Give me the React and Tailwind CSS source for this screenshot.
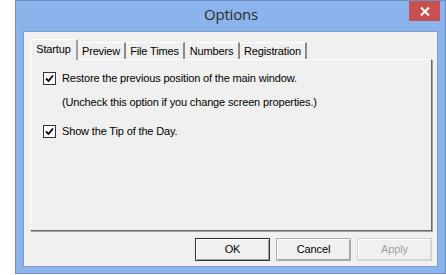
import React from 'react';

const tabs = [
  { label: 'Startup', w: 'w-[48px]' },
  { label: 'Preview', w: 'w-[48px]' },
  { label: 'File Times', w: 'w-[59px]' },
  { label: 'Numbers', w: 'w-[55px]' },
  { label: 'Registration', w: 'w-[67px]' },
];

function Check({ checked = true }) {
  return (
    <span className="w-[13px] h-[13px] border border-[#333] bg-white flex items-center justify-center shrink-0">
      {checked && (
        <svg width="9" height="9" viewBox="0 0 9 9">
          <path d="M1 4.5 L3.5 7 L8 1.5" fill="none" stroke="#000" strokeWidth="1.8" />
        </svg>
      )}
    </span>
  );
}

function Button({ children, disabled, primary }) {
  return (
    <button
      className={
        'w-[75px] h-[23px] bg-[#f0f0f0] text-[11px] leading-[13px] ' +
        (primary
          ? 'border border-[#333] shadow-[inset_1px_1px_0_#fff,inset_-1px_-1px_0_#a0a0a0]'
          : 'border border-[#adadad] shadow-[inset_1px_1px_0_#fff,inset_-1px_-1px_0_#a0a0a0]') +
        (disabled ? ' text-[#a0a0a0] border-[#d0d0d0] shadow-[inset_1px_1px_0_#fff,inset_-1px_-1px_0_#d8d8d8]' : ' text-black')
      }
    >
      {children}
    </button>
  );
}

export default function App() {
  return (
    <div className="w-[446px] h-[275px] bg-white pl-[15px] font-['Liberation_Sans',Arial,sans-serif] overflow-hidden">
      <div className="w-[431px] h-[274px] bg-[#8cb4ec] border border-[#6f8fc3] flex flex-col relative">
        {/* Title bar */}
        <div className="h-[30px] flex items-center justify-center pb-[3px]">
          <span className="font-['Open_Sans',sans-serif] text-[15px] text-[#2b2b2b] ml-[1px] tracking-[-0.2px]">Options</span>
        </div>
        <div className="absolute top-0 right-[5px] w-[31px] h-[20px] bg-[#c75050] flex items-center justify-center">
          <svg width="10" height="9" viewBox="0 0 10 9">
            <path d="M1 0.5 L9 8.5 M9 0.5 L1 8.5" stroke="#fff" strokeWidth="2" />
          </svg>
        </div>

        {/* Client area */}
        <div className="flex-1 mx-[7px] mb-[6px] bg-[#f0f0f0] border border-[#7d9ccb] flex flex-col pl-[6px] pr-[5px] pt-[6px] text-[11px] leading-[13px] tracking-[-0.15px]">
          {/* Tabs */}
          <div className="flex items-end h-[21px] relative z-10">
            {tabs.map((t, i) =>
              i === 0 ? (
                <div
                  key={t.label}
                  className={t.w + ' h-[21px] bg-[#f0f0f0] border-l border-t border-white border-r-2 border-r-[#a0a0a0] rounded-tr-[2px] text-black flex items-center justify-center mb-[-1px] pb-[2px]'}
                >
                  {t.label}
                </div>
              ) : (
                <div
                  key={t.label}
                  className={t.w + ' h-[17px] bg-[#f0f0f0] border-t border-white border-r-2 border-r-[#8a8a8a] text-black flex items-center justify-center pt-[1px]'}
                >
                  {t.label}
                </div>
              )
            )}
          </div>

          {/* Tab panel */}
          <div className="h-[172px] border-t border-l border-white border-r border-b border-r-[#696969] border-b-[#696969] shadow-[1px_1px_0_#a0a0a0] bg-[#f0f0f0] pl-[12px] pt-[12px] text-black">
            <div className="flex items-center gap-[6px]">
              <Check />
              <span>Restore the previous position of the main window.</span>
            </div>
            <div className="ml-[19px] mt-[11px]">(Uncheck this option if you change screen properties.)</div>
            <div className="flex items-center gap-[6px] mt-[16px]">
              <Check />
              <span>Show the Tip of the Day.</span>
            </div>
          </div>

          {/* Buttons */}
          <div className="flex justify-end gap-[6px] mt-[7px]">
            <Button primary>OK</Button>
            <Button>Cancel</Button>
            <Button disabled>Apply</Button>
          </div>
        </div>
      </div>
    </div>
  );
}
